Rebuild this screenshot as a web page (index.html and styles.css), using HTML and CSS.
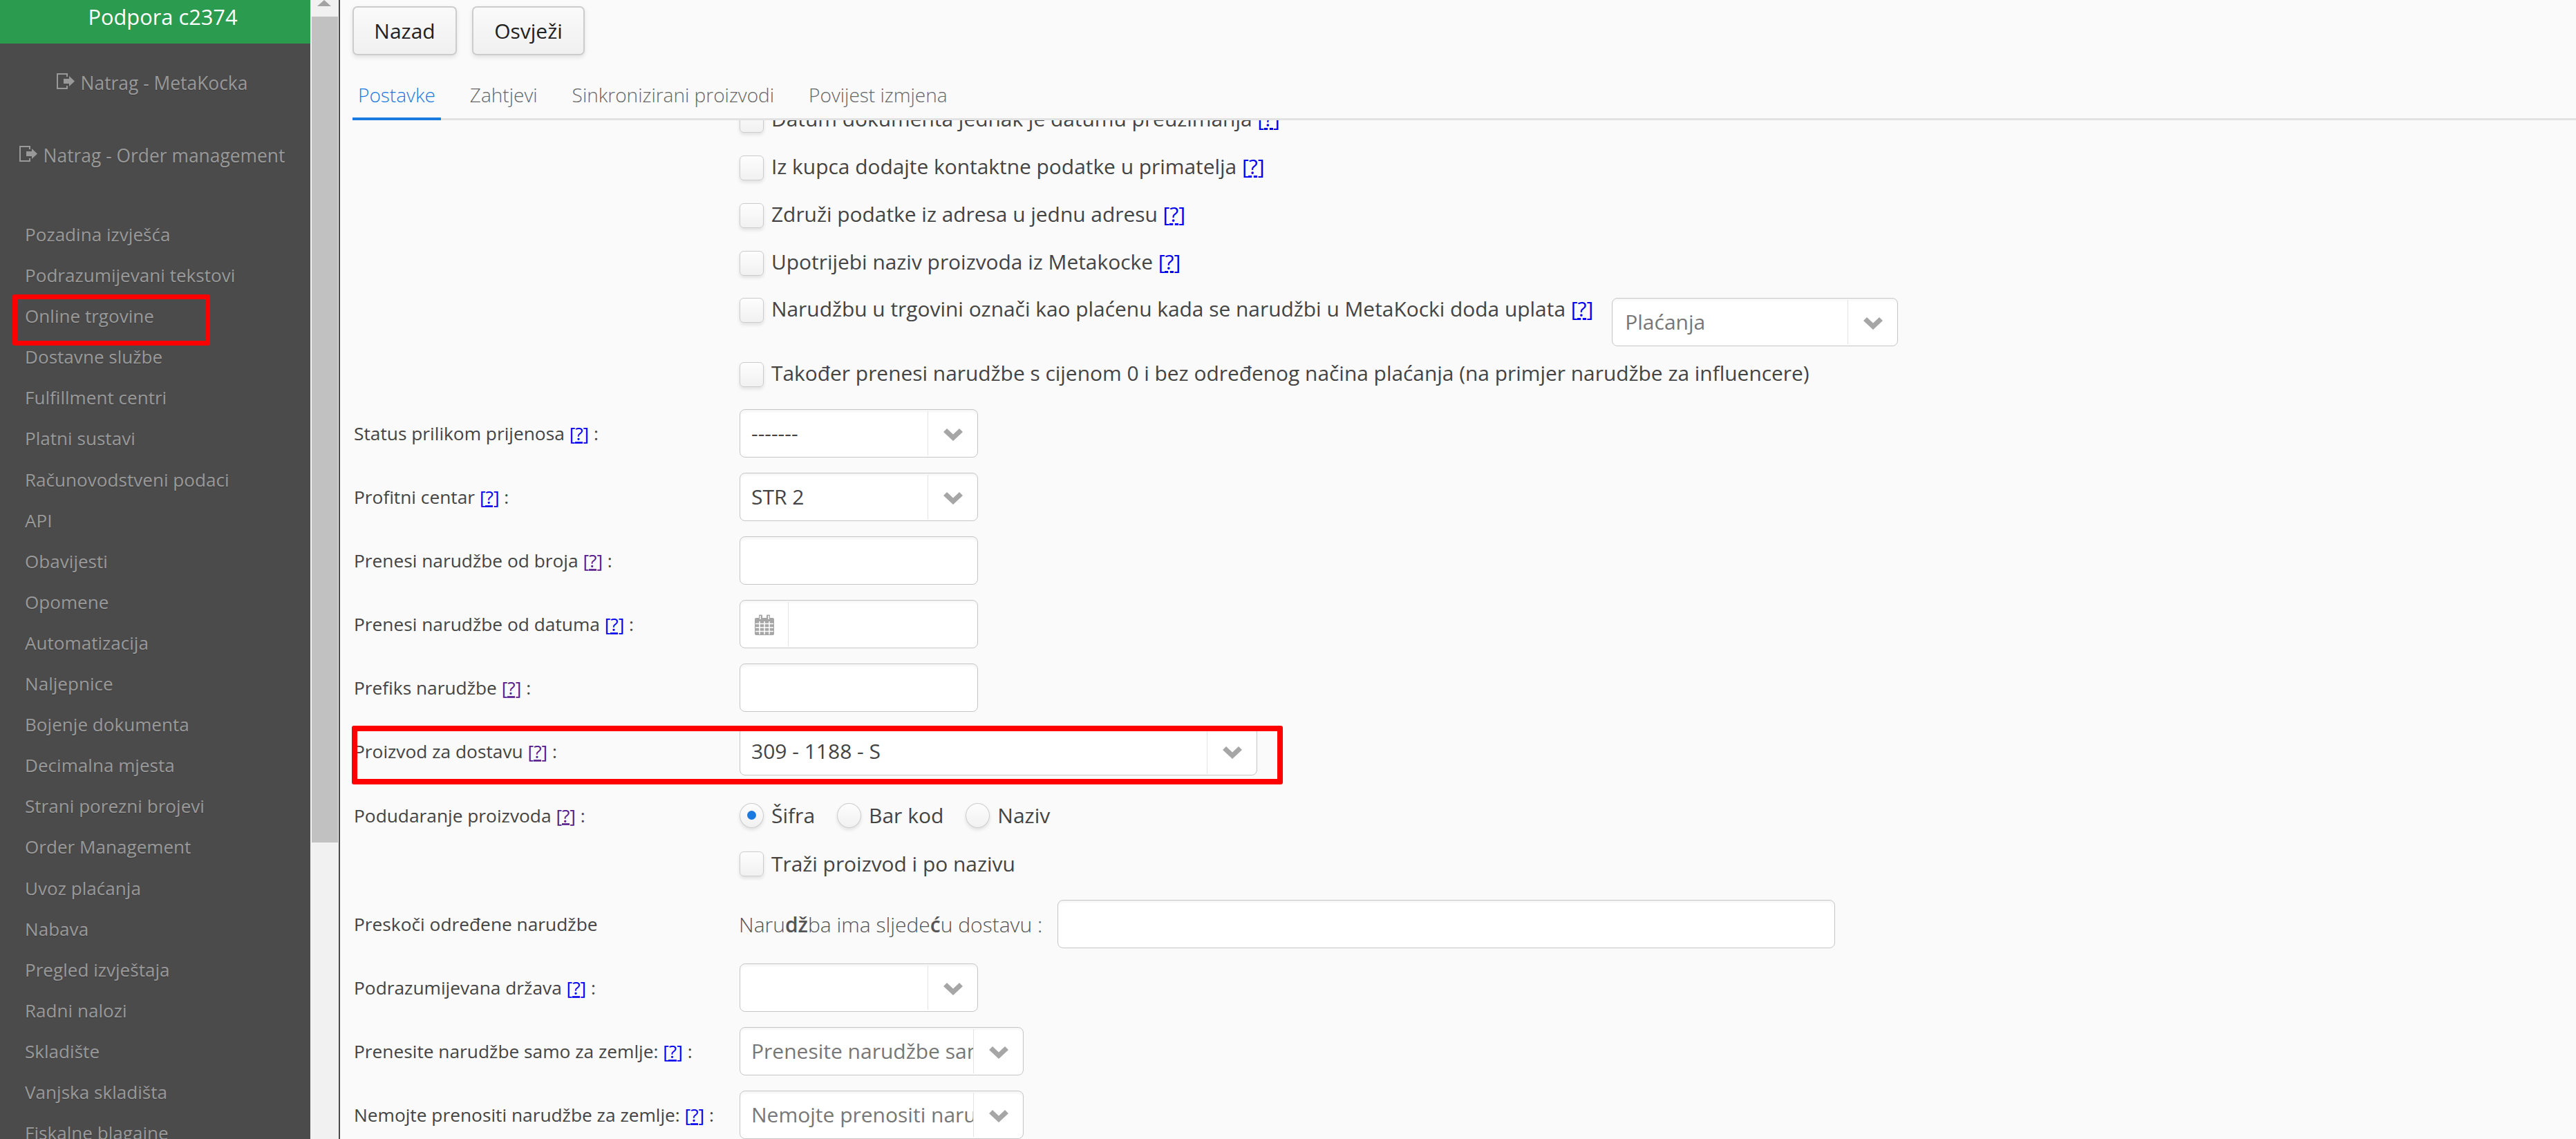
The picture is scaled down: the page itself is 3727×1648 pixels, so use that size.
FILE: index.html
```html
<!DOCTYPE html>
<html lang="hr">
<head>
<meta charset="utf-8">
<title>Postavke</title>
<link rel="stylesheet" href="styles.css">
</head>
<body>
<svg class="defs" width="0" height="0">
  <symbol id="chev" viewBox="0 0 28 18"><path d="M0 5 L5 0 L14 8.5 L23 0 L28 5 L14 18 Z"/></symbol>
  <symbol id="exit" viewBox="0 0 26 23"><path class="exit-b" d="M15 5 V1 H1 V22 H15 V18"/><path class="exit-a" d="M10 8 H18 V4 L26 11.5 L18 19 V15 H10 Z"/></symbol>
</svg>
<div class="app">
  <aside class="sidebar">
    <div class="brand">Podpora c2374</div>
    <a class="back back-first"><svg class="exit-icon"><use href="#exit"/></svg>Natrag - MetaKocka</a>
    <a class="back"><svg class="exit-icon"><use href="#exit"/></svg>Natrag - Order management</a>
    <nav class="nav">
      <a>Pozadina izvješća</a>
      <a>Podrazumijevani tekstovi</a>
      <a>Online trgovine</a>
      <a>Dostavne službe</a>
      <a>Fulfillment centri</a>
      <a>Platni sustavi</a>
      <a>Računovodstveni podaci</a>
      <a>API</a>
      <a>Obavijesti</a>
      <a>Opomene</a>
      <a>Automatizacija</a>
      <a>Naljepnice</a>
      <a>Bojenje dokumenta</a>
      <a>Decimalna mjesta</a>
      <a>Strani porezni brojevi</a>
      <a>Order Management</a>
      <a>Uvoz plaćanja</a>
      <a>Nabava</a>
      <a>Pregled izvještaja</a>
      <a>Radni nalozi</a>
      <a>Skladište</a>
      <a>Vanjska skladišta</a>
      <a>Fiskalne blagajne</a>
    </nav>
  </aside>
  <div class="scrollbar"><i class="scroll-arrow"></i><i class="scroll-thumb"></i></div>
  <main class="main">
    <div class="toolbar">
      <button class="btn">Nazad</button>
      <button class="btn btn-wide">Osvježi</button>
    </div>
    <div class="tabs">
      <a class="tab tab-active">Postavke</a>
      <a class="tab">Zahtjevi</a>
      <a class="tab">Sinkronizirani proizvodi</a>
      <a class="tab">Povijest izmjena</a>
    </div>
    <div class="viewport">
      <div class="form">
        <div class="check-row"><i class="check"></i><span>Datum dokumenta jednak je datumu preuzimanja <a class="help">[<u>?</u>]</a></span></div>
        <div class="check-row"><i class="check"></i><span>Iz kupca dodajte kontaktne podatke u primatelja <a class="help">[<u>?</u>]</a></span></div>
        <div class="check-row"><i class="check"></i><span>Združi podatke iz adresa u jednu adresu <a class="help">[<u>?</u>]</a></span></div>
        <div class="check-row"><i class="check"></i><span>Upotrijebi naziv proizvoda iz Metakocke <a class="help">[<u>?</u>]</a></span></div>
        <div class="check-row check-row-tall">
          <i class="check"></i><span class="check-long">Narudžbu u trgovini označi kao plaćenu kada se narudžbi u MetaKocki doda uplata <a class="help">[<u>?</u>]</a></span>
          <div class="select select-pay"><span class="select-text placeholder">Plaćanja</span><span class="select-arrow"><svg class="chev"><use href="#chev"/></svg></span></div>
        </div>
        <div class="check-row check-row-end"><i class="check"></i><span>Također prenesi narudžbe s cijenom 0 i bez određenog načina plaćanja (na primjer narudžbe za influencere)</span></div>

        <div class="field"><label class="label">Status prilikom prijenosa <a class="help">[<u>?</u>]</a> :</label>
          <div class="select"><span class="select-text">-------</span><span class="select-arrow"><svg class="chev"><use href="#chev"/></svg></span></div></div>
        <div class="field"><label class="label">Profitni centar <a class="help">[<u>?</u>]</a> :</label>
          <div class="select"><span class="select-text">STR 2</span><span class="select-arrow"><svg class="chev"><use href="#chev"/></svg></span></div></div>
        <div class="field"><label class="label">Prenesi narudžbe od broja <a class="help visited">[<u>?</u>]</a> :</label>
          <input class="input" type="text"></div>
        <div class="field"><label class="label">Prenesi narudžbe od datuma <a class="help">[<u>?</u>]</a> :</label>
          <div class="select date"><span class="date-icon"><svg class="cal" viewBox="0 0 28 30"><path class="cal-body" d="M2 5 H6 V1.5 Q6 .5 7 .5 H10 Q11 .5 11 1.5 V5 H17 V1.5 Q17 .5 18 .5 H21 Q22 .5 22 1.5 V5 H26 Q28 5 28 7 V28 Q28 30 26 30 H2 Q0 30 0 28 V7 Q0 5 2 5 Z"/><path class="cal-grid" d="M8 2 V7 M20 2 V7 M1 13.5 H27 M1 19 H27 M1 24.5 H27 M7 10 V29 M14 10 V29 M21 10 V29"/></svg></span></div></div>
        <div class="field"><label class="label">Prefiks narudžbe <a class="help visited">[<u>?</u>]</a> :</label>
          <input class="input" type="text"></div>
        <div class="field field-radio-next"><label class="label">Proizvod za dostavu <a class="help visited">[<u>?</u>]</a> :</label>
          <div class="select select-wide"><span class="select-text">309 - 1188 - S</span><span class="select-arrow"><svg class="chev"><use href="#chev"/></svg></span></div></div>

        <div class="radio-row"><label class="label">Podudaranje proizvoda <a class="help visited">[<u>?</u>]</a> :</label>
          <i class="radio radio-on"></i><span class="radio-text">Šifra</span>
          <i class="radio"></i><span class="radio-text">Bar kod</span>
          <i class="radio"></i><span class="radio-text">Naziv</span></div>
        <div class="check-row check-row-search"><i class="check"></i><span>Traži proizvod i po nazivu</span></div>

        <div class="field"><label class="label">Preskoči određene narudžbe</label>
          <span class="skip-text">Naru<b>dž</b>ba ima sljede<b>ć</b>u dostavu :</span>
          <input class="input input-wide" type="text"></div>
        <div class="field"><label class="label">Podrazumijevana država <a class="help">[<u>?</u>]</a> :</label>
          <div class="select"><span class="select-text"></span><span class="select-arrow"><svg class="chev"><use href="#chev"/></svg></span></div></div>
        <div class="field"><label class="label">Prenesite narudžbe samo za zemlje: <a class="help">[<u>?</u>]</a> :</label>
          <div class="select select-mid"><span class="select-text placeholder">Prenesite narudžbe samo za zemlje</span><span class="select-arrow"><svg class="chev"><use href="#chev"/></svg></span></div></div>
        <div class="field"><label class="label">Nemojte prenositi narudžbe za zemlje: <a class="help">[<u>?</u>]</a> :</label>
          <div class="select select-mid"><span class="select-text placeholder">Nemojte prenositi narudžbe za zemlje</span><span class="select-arrow"><svg class="chev"><use href="#chev"/></svg></span></div></div>
      </div>
    </div>
  </main>
  <div class="mark mark-nav"></div>
  <div class="mark mark-field"></div>
</div>
</body>
</html>
```
FILE: styles.css
```css
* { box-sizing: border-box; }
html, body { margin: 0; height: 100%; overflow: hidden; }
body { font-family: "Open Sans", "Noto Sans", sans-serif; color: #444; background: #fafafa; }
.defs { position: absolute; }
.app { position: relative; display: flex; height: 1648px; overflow: hidden; }

.sidebar { width: 449px; flex: none; background: #4b4b4b; color: #999; font-size: 26.1px; overflow: hidden; }
.brand { height: 63px; background: #2a9b4f; color: #fff; font-size: 30.8px; line-height: 48px; text-align: center; padding-left: 22px; }
.back { display: flex; align-items: center; justify-content: center; height: 40px; padding-right: 9px; margin-top: 37px; font-size: 26.4px; text-shadow: 0 1px 1px rgba(0,0,0,.2); white-space: nowrap; }
.back-first { margin-top: 37px; }
.back + .back { margin-top: 65px; }
.exit-icon { width: 26px; height: 23px; margin: -6px 9px 0 0; flex: none; }
.exit-b { fill: none; stroke: #999; stroke-width: 2; }
.exit-a { fill: #999; }
.nav { display: flex; flex-direction: column; margin-top: 65px; }
.nav a { height: 59.1px; line-height: 59px; padding-left: 36px; white-space: nowrap; text-shadow: 0 1px 1px rgba(0,0,0,.2); }

.scrollbar { position: relative; width: 43px; flex: none; background: #f1f1f1; border-right: 2px solid #4a4a4a; }
.scroll-arrow { display: block; width: 0; height: 0; margin: 0 auto; border: 10px solid transparent; border-top: 0; border-bottom: 9px solid #a3a3a3; transform: translateX(-1px); }
.scroll-thumb { display: block; width: 38px; height: 1195px; margin: 15px 0 0 2px; background: #c1c1c1; }

.main { flex: 1; min-width: 0; display: flex; flex-direction: column; background: #fafafa; }
.toolbar { display: flex; gap: 22px; padding: 9px 0 0 18px; height: 104px; flex: none; }
.btn { width: 151px; height: 71px; padding: 0; border: 2px solid #ccc; border-radius: 7px; background: linear-gradient(#fafafa, #f0f0f0); box-shadow: 0 3px 6px rgba(0,0,0,.1); color: #222; font: 400 30px "Open Sans", sans-serif; }
.btn-wide { width: 163px; }
.tabs { display: flex; height: 70px; margin-left: 18px; border-bottom: 3px solid #e2e2e2; flex: none; font-size: 28px; font-weight: 300; color: #666; }
.tab { position: relative; padding: 0 8px; margin-right: 34px; line-height: 66px; white-space: nowrap; }
.tab-active { color: #1a7ae0; }
.tab-active::after { content: ""; position: absolute; left: 0; right: 0; bottom: -3px; height: 4px; background: #1a7ae0; }
.viewport { flex: 1; min-height: 0; overflow: hidden; }
.form { margin-top: -35px; padding-left: 20px; font-size: 26.3px; }

.check-row { display: flex; align-items: center; height: 69px; padding-left: 558px; font-size: 29.9px; white-space: nowrap; }
.check-row > span { margin-top: -4px; }
.check { display: block; width: 35px; height: 36px; margin-right: 11px; flex: none; border: 1.5px solid #ccc; border-radius: 6px; background: linear-gradient(#fdfdfd, #f1f1f1); box-shadow: 0 3px 5px rgba(0,0,0,.1); }
.check-row-tall { height: 92px; align-items: flex-start; padding-top: 16px; }
.check-row > .check-long { line-height: 36px; margin-top: -2px; }
.check-row-end { margin-bottom: 16px; }
.check-row-search { margin-bottom: 18px; }
.check-row-search > span { margin-top: 0; }
.help { color: #00e; }
.help.visited { color: #551a8b; }
.help u { text-decoration-style: dashed; }

.field { display: flex; align-items: center; height: 70px; margin-bottom: 22px; white-space: nowrap; }
.label { width: 558px; flex: none; }
.select { position: relative; display: flex; width: 345px; height: 70px; flex: none; border: 1px solid #c6c6c6; border-radius: 8px; background: #fff; box-shadow: inset 0 3px 3px #f6f6f6; overflow: hidden; }
.select-text { flex: 1; min-width: 0; padding-left: 16px; line-height: 68px; font-size: 30px; color: #444; overflow: hidden; white-space: nowrap; }
.select-text.placeholder { color: #777; }
.select-arrow { display: flex; align-items: center; justify-content: center; width: 72px; flex: none; margin: 2px 0; border-left: 1px solid #e3e3e3; }
.chev { width: 28px; height: 18px; margin-top: 3px; fill: #a6a6a6; }
.select-pay { width: 414px; margin-left: 27px; margin-top: 0; }
.select-pay .select-text { padding-left: 18px; }
.select-wide { width: 749px; }
.select-mid { width: 411px; }
.date { display: flex; }
.date-icon { display: flex; align-items: center; justify-content: center; width: 70px; margin: 2px 0; border-right: 1px solid #e3e3e3; }
.cal { width: 28px; height: 30px; margin-top: 1px; }
.cal-body { fill: #a6a6a6; }
.cal-grid { stroke: #fff; stroke-width: 1.5; fill: none; }
.input { display: block; width: 345px; height: 70px; flex: none; padding: 0 17px; border: 1px solid #c6c6c6; border-radius: 8px; background: #fff; box-shadow: inset 0 3px 3px #f6f6f6; }
.input-wide { width: 1125px; }
.skip-text { width: 460px; flex: none; margin-left: -1px; margin-right: 1px; font-size: 30px; font-weight: 300; color: #555; }
.skip-text b { font-weight: 600; }

.radio-row { display: flex; align-items: center; height: 71px; margin-top: 1px; font-size: 26.3px; white-space: nowrap; }
.radio { position: relative; display: block; width: 35px; height: 36px; margin-right: 11px; flex: none; border: 1.5px solid #ccc; border-radius: 50%; background: linear-gradient(#fdfdfd, #f1f1f1); box-shadow: 0 3px 5px rgba(0,0,0,.1); }
.radio-on::after { content: ""; position: absolute; left: 9.5px; top: 10px; width: 13px; height: 13px; border-radius: 50%; background: #1a7ae0; }
.radio-text { font-size: 30px; margin-right: 32px; }

.mark { position: absolute; border: 7px solid #f00; border-radius: 3px; pointer-events: none; }
.mark-nav { left: 18px; top: 426px; width: 286px; height: 74px; }
.mark-field { left: 509px; top: 1050px; width: 1347px; height: 85px; border-width: 8px; }
```
